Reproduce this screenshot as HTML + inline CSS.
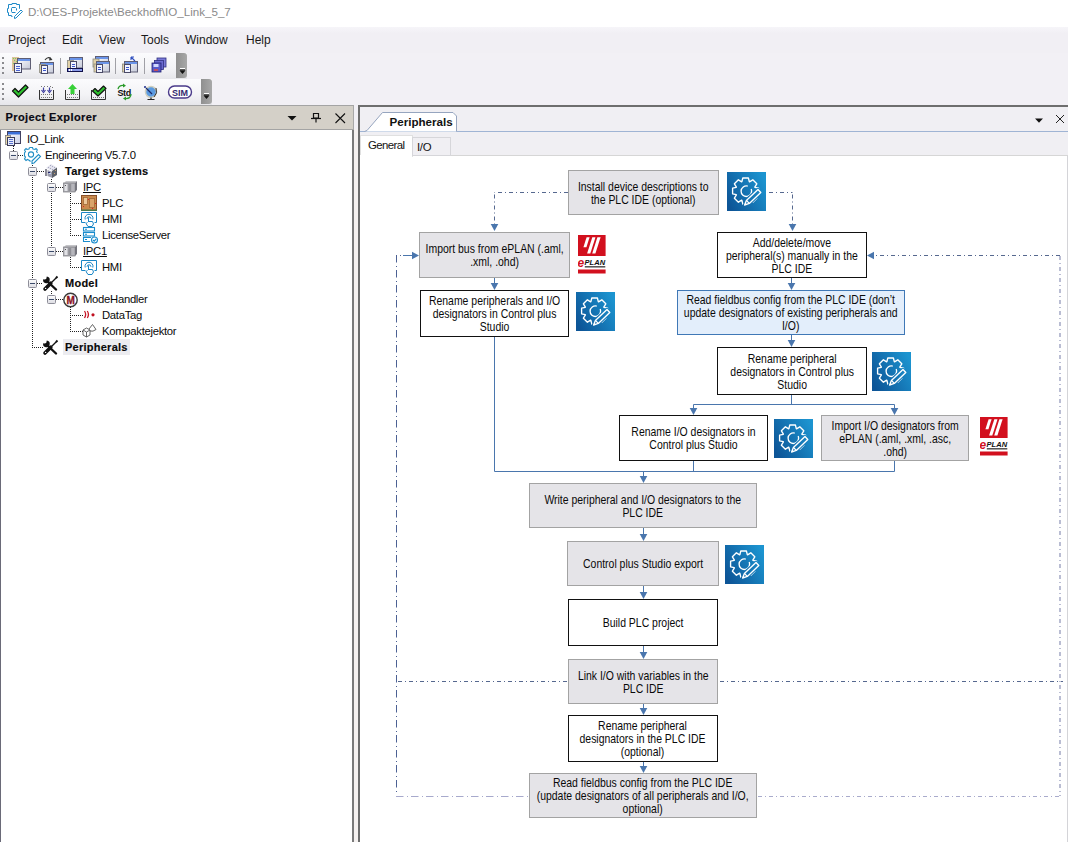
<!DOCTYPE html>
<html><head><meta charset="utf-8">
<style>
*{margin:0;padding:0;box-sizing:border-box}
html,body{width:1068px;height:842px;overflow:hidden;background:#f2f0f5;font-family:"Liberation Sans",sans-serif;position:relative}
.a{position:absolute}
#title{left:0;top:0;width:1068px;height:27px;background:#fff}
#title .t{left:28px;top:4.8px;font-size:11.6px;color:#8a8a8a;white-space:nowrap}
#menu{left:0;top:27px;width:1068px;height:26px;background:linear-gradient(#f6f5f9,#f1eff4 25%,#f1eff4)}
#menu span{position:absolute;top:6px;font-size:12px;color:#1a1a1a}
.tb{background:linear-gradient(#fbfbfd,#f3f3f6 60%,#e6e6ea)}
.grip{background:linear-gradient(90deg,#8f8f8f,#a8a8a8);border-radius:0 3px 3px 0}
#lp{left:0;top:129px;width:354px;height:713px;background:#fff;border-left:1px solid #6a6a78;border-right:2px solid #7a7a7a}
#lphead{left:0;top:105px;width:354px;height:25px;background:#d4d0c8;border-top:1px solid #a4a4a4;border-bottom:1px solid #a4a4a4;border-right:1px solid #a8a8a8}
#lphead .t{left:5.5px;top:5px;font-size:11px;font-weight:bold;color:#0a0a14;letter-spacing:0.4px;-webkit-text-stroke:0.2px #0a0a14}
#split{left:354px;top:129px;width:4px;height:713px;background:#f5f1f0}
#rp{left:358px;top:105px;width:710px;height:737px;background:#fff;border-left:2px solid #6e6e6e;border-top:2px solid #6e6e6e}
#tabstrip{left:360px;top:107px;width:708px;height:25px;background:#f0eff3;border-bottom:1px solid #9fb4d4}
#subtabs{left:360px;top:132px;width:708px;height:24px;background:#f0eff3;border-bottom:1px solid #d6d6d6}
.tree{font-size:11.3px;color:#0a0a0a;white-space:nowrap;letter-spacing:-0.3px}
.tree .r{position:absolute;height:16px;line-height:16px}
.tree .b{font-weight:bold;font-size:11px;letter-spacing:0.25px;-webkit-text-stroke:0.15px #0a0a0a}
.tree .u{text-decoration:underline}
.tree .sel{background:#ececf0;padding:0 2px;margin-left:-2px}
.box{position:absolute;display:flex;align-items:center;justify-content:center;text-align:center;font-size:12.2px;line-height:13px;color:#0a0a0a}
.box>div{transform:scaleX(0.857);white-space:nowrap;position:relative;top:1px}
.g{background:#e5e4e8;border:1px solid #a3a3a3}
.w{background:#fff;border:1.5px solid #111}
.bl{background:#e3eefb;border:1px solid #3f78b6}
</style></head><body>

<svg width="0" height="0" style="position:absolute">
<defs>
<linearGradient id="gg" gradientUnits="userSpaceOnUse" x1="0" y1="30" x2="39" y2="9"><stop offset="0" stop-color="#0d5597"/><stop offset="1" stop-color="#1c94d0"/></linearGradient>
<symbol id="gearsym" viewBox="0 0 39 39">
<rect width="39" height="39" fill="url(#gg)"/>
<g fill="none" stroke="#fff" stroke-width="1.35" stroke-linejoin="round">
<path d="M14.9,9.7 L15.8,6.0 L21.4,6.0 L22.3,9.7 L22.5,9.8 L25.8,7.8 L29.8,11.8 L27.8,15.1 L27.9,15.3 L31.6,16.2 L31.6,21.8 L27.9,22.7 L27.8,22.9 L29.8,26.2 L25.8,30.2 L22.5,28.2 L22.3,28.3 L21.4,32.0 L15.8,32.0 L14.9,28.3 L14.7,28.2 L11.4,30.2 L7.4,26.2 L9.4,22.9 L9.3,22.7 L5.6,21.8 L5.6,16.2 L9.3,15.3 L9.4,15.1 L7.4,11.8 L11.4,7.8 L14.7,9.8Z"/>
<path d="M24.2,17.0 A5.3,5.3 0 1 1 20.8,14.1"/>
</g>
<path d="M17.6,33.0 L22.3,31.4 L33.8,20.5 L31.0,17.5 L19.4,28.4Z" fill="url(#gg)" stroke="url(#gg)" stroke-width="3.5" stroke-linejoin="round"/>
<g fill="none" stroke="#fff" stroke-width="1.35" stroke-linejoin="round">
<path d="M17.6,33.0 L22.3,31.4 L33.8,20.5 L31.0,17.5 L19.4,28.4Z"/>
<path d="M22.3,31.4 L19.4,28.4"/>
</g>
</symbol>
<symbol id="eplansym" viewBox="0 0 28 40">
<rect x="0" y="0" width="27.6" height="21" fill="#d2101e"/>
<g fill="#fff"><path d="M8.6,2.3 L11.6,2.3 L8.4,12.3 L5.4,12.3 Z"/><path d="M14.3,2.3 L17.5,2.3 L12.3,18.5 L9.1,18.5 Z"/><path d="M19.4,2.3 L22.6,2.3 L17.4,18.5 L14.2,18.5 Z"/></g>
<text x="-0.5" y="31.5" font-family="Liberation Sans" font-size="12" font-weight="bold" font-style="italic" fill="#d2101e">e</text>
<text x="6.6" y="30.4" font-family="Liberation Sans" font-size="6.4" font-weight="bold" font-style="italic" fill="#111" textLength="20.5" lengthAdjust="spacingAndGlyphs">PLAN</text>
<rect x="6.8" y="31.3" width="20.5" height="1.1" fill="#111"/>
<rect x="0" y="34.5" width="27.6" height="4" fill="#d2101e"/>
</symbol>
</defs>
</svg>

<div id="title" class="a">
  <svg class="a" style="left:0;top:0" width="26" height="26"><g fill="none" stroke="#1f8ac8" stroke-width="1">
<path d="M20,8.5 L19.5,8.5 L19.5,4.5 L16.5,4.5 L16.5,3.5 L12,3.5 L12,4.5 L8.5,4.5 L8.5,8.5 L7.5,8.5 L7.5,12.5 L8.5,12.5 L8.5,15.5 L11.5,15.5 L11.5,16.5 L12.5,16.5"/>
<path d="M12,7.5 L15.5,7.5 L16.5,8.5 L16.5,10.5 M15.5,12.5 L12,12.5 L11.5,11.5 L11.5,8.5 L12,7.5"/>
<path d="M14.5,16.5 L21,10 L22.5,11.5 L16,18 L14.5,18.5 Z"/>
</g></svg>
  <div class="a t">D:\OES-Projekte\Beckhoff\IO_Link_5_7</div>
</div>

<div id="menu" class="a">
  <span style="left:8px">Project</span>
  <span style="left:62px">Edit</span>
  <span style="left:99px">View</span>
  <span style="left:141px">Tools</span>
  <span style="left:185px">Window</span>
  <span style="left:246px">Help</span>
</div>

<!-- toolbars -->
<div class="a tb" style="left:0;top:53px;width:187px;height:26px"></div>
<div class="a grip" style="left:176px;top:53px;width:11px;height:25px"></div>
<div class="a tb" style="left:0;top:79px;width:212px;height:26px"></div>
<div class="a grip" style="left:201px;top:79px;width:11px;height:25px"></div>
<svg class="a" style="left:0;top:50px" width="220" height="56">
<defs>
<linearGradient id="wg" x1="0" y1="0" x2="1" y2="1"><stop offset="0" stop-color="#ffffff"/><stop offset="1" stop-color="#c4c8d8"/></linearGradient>
<g id="win"><rect x="0.5" y="0.5" width="13" height="10.5" fill="url(#wg)" stroke="#5e5e74"/><rect x="1" y="1" width="12" height="2" fill="#6a94ea"/></g>
<g id="doc"><rect x="0.5" y="0.5" width="6" height="8" fill="#f2f4ff" stroke="#4a4a66"/><rect x="2" y="3" width="3" height="1" fill="#3b55c8"/><rect x="2" y="5" width="3" height="1" fill="#3b55c8"/></g>
<g id="docb"><rect x="-1.5" y="-0.5" width="6" height="8" fill="#e2d2a8" stroke="#8a8a80" stroke-width="0.8"/></g>
</defs>
<!-- grips -->
<g fill="#8a8a8e"><rect x="2" y="7" width="2" height="2"/><rect x="2" y="12" width="2" height="2"/><rect x="2" y="17" width="2" height="2"/><rect x="2" y="22" width="2" height="2"/>
<rect x="2" y="33" width="2" height="2"/><rect x="2" y="38" width="2" height="2"/><rect x="2" y="43" width="2" height="2"/><rect x="2" y="48" width="2" height="2"/></g>
<!-- tb1 icon1 -->
<rect x="12" y="7" width="7" height="14" fill="#dcc29a"/><g fill="#7ad060"><rect x="13" y="8" width="1" height="1"/><rect x="15" y="8" width="1" height="1"/><rect x="14" y="10" width="1" height="1"/><rect x="16" y="11" width="1" height="1"/><rect x="13" y="13" width="1" height="1"/></g><g fill="#c04040"><rect x="17" y="13" width="1" height="1"/></g>
<use href="#win" x="17" y="8"/>
<rect x="14.5" y="13.5" width="7" height="9" fill="#eef2ff" stroke="#4a4a66"/><g fill="#4a62d0"><rect x="16" y="16" width="4" height="1"/><rect x="16" y="18" width="4" height="1"/><rect x="16" y="20" width="4" height="1"/></g>
<!-- icon2 -->
<use href="#win" x="40" y="12"/>
<rect x="39.5" y="14.5" width="6" height="8" fill="#e2d2a8" stroke="#8a8a80" stroke-width="0.8"/>
<use href="#doc" x="41" y="15"/>
<path d="M45,10 Q48,6 51,9" fill="none" stroke="#333" stroke-width="1.2"/><path d="M50,7 L52.5,10 L49,10.5 Z" fill="#333"/>
<rect x="60" y="8" width="1" height="16" fill="#a0a0a6"/>
<!-- icon3 -->
<use href="#win" x="69" y="7"/>
<rect x="67.5" y="10.5" width="6" height="8" fill="#e2d2a8" stroke="#8a8a80" stroke-width="0.8"/>
<use href="#doc" x="70" y="11"/>
<rect x="67" y="18" width="16" height="4" fill="#10104a"/><rect x="68" y="19" width="14" height="2" fill="#8a9ae8"/><rect x="69" y="19" width="1" height="2" fill="#fff"/><rect x="71" y="19" width="1" height="2" fill="#fff"/>
<!-- icon4 -->
<use href="#win" x="95" y="6"/>
<rect x="93" y="9" width="6" height="8" fill="#e2d2a8" stroke="#8a8a80" stroke-width="0.8"/>
<use href="#win" x="96" y="11"/>
<rect x="94" y="14" width="6" height="8" fill="#e2d2a8" stroke="#8a8a80" stroke-width="0.8"/>
<use href="#doc" x="96" y="14"/>
<rect x="115" y="8" width="1" height="16" fill="#a0a0a6"/>
<!-- icon5 -->
<use href="#win" x="124" y="11"/>
<rect x="122.5" y="14" width="6" height="8" fill="#e2d2a8" stroke="#8a8a80" stroke-width="0.8"/>
<use href="#doc" x="124" y="14"/>
<path d="M131,7 L135,11 M131,7 L131,10 M131,7 L134,7" stroke="#3050c0" stroke-width="1.1" fill="none"/>
<rect x="144" y="8" width="1" height="16" fill="#a0a0a6"/>
<!-- icon6 floppies -->
<rect x="157" y="8" width="9" height="9" fill="#7a7ad8" stroke="#303080" stroke-width="0.8"/>
<rect x="154.5" y="10.5" width="9" height="9" fill="#6a6ad0" stroke="#303080" stroke-width="0.8"/>
<rect x="152" y="13" width="9" height="9" fill="#5a5ac8" stroke="#202070" stroke-width="0.8"/>
<rect x="153.5" y="14" width="5" height="3" fill="#d0d8ff"/><rect x="154" y="19" width="4" height="2" fill="#c05060"/>
<!-- grip1 glyph -->
<rect x="180" y="18" width="5" height="1" fill="#fff"/><path d="M179.5,20.5 L185.5,20.5 L182.5,24 Z" fill="#111"/><path d="M180,20 L185,20" stroke="#111"/>
<!-- tb2 -->
<path d="M12.5,41 L15,38.5 L18.5,42 L25.5,35 L28,37.5 L18.5,47 Z" fill="#2ec02e" stroke="#111" stroke-width="1.2" stroke-linejoin="round"/>
<!-- download -->
<path d="M39.5,40 L39.5,49.5 L53.5,49.5 L53.5,40" fill="none" stroke="#333" stroke-width="1"/>
<g fill="#777"><rect x="41" y="44" width="1" height="1"/><rect x="43" y="44" width="1" height="1"/><rect x="45" y="44" width="1" height="1"/><rect x="47" y="44" width="1" height="1"/><rect x="49" y="44" width="1" height="1"/><rect x="51" y="44" width="1" height="1"/><rect x="41" y="47" width="1" height="1"/><rect x="43" y="47" width="1" height="1"/><rect x="45" y="47" width="1" height="1"/><rect x="47" y="47" width="1" height="1"/><rect x="49" y="47" width="1" height="1"/><rect x="51" y="47" width="1" height="1"/>
<rect x="41" y="36" width="1" height="1"/><rect x="44" y="36" width="1" height="1"/><rect x="47" y="36" width="1" height="1"/><rect x="50" y="36" width="1" height="1"/><rect x="52" y="37" width="1" height="1"/></g>
<path d="M43.5,37.5 L43.5,41 M41.5,40 L43.5,42.5 L45.5,40 M49.5,37.5 L49.5,41 M47.5,40 L49.5,42.5 L51.5,40" stroke="#4040a0" stroke-width="1.2" fill="none"/>
<!-- upload -->
<path d="M65.5,40 L65.5,49.5 L79.5,49.5 L79.5,40" fill="none" stroke="#333" stroke-width="1"/>
<g fill="#777"><rect x="67" y="44" width="1" height="1"/><rect x="69" y="44" width="1" height="1"/><rect x="71" y="44" width="1" height="1"/><rect x="73" y="44" width="1" height="1"/><rect x="75" y="44" width="1" height="1"/><rect x="77" y="44" width="1" height="1"/><rect x="67" y="47" width="1" height="1"/><rect x="69" y="47" width="1" height="1"/><rect x="71" y="47" width="1" height="1"/><rect x="73" y="47" width="1" height="1"/><rect x="75" y="47" width="1" height="1"/><rect x="77" y="47" width="1" height="1"/></g>
<path d="M72.5,34 L77,39 L74.5,39 L74.5,44 L70.5,44 L70.5,39 L68,39 Z" fill="#38d038"/>
<!-- check box -->
<path d="M91.5,40 L91.5,49.5 L105.5,49.5 L105.5,40" fill="none" stroke="#333" stroke-width="1"/>
<g fill="#777"><rect x="93" y="47" width="1" height="1"/><rect x="95" y="47" width="1" height="1"/><rect x="97" y="47" width="1" height="1"/><rect x="99" y="47" width="1" height="1"/><rect x="101" y="47" width="1" height="1"/><rect x="103" y="47" width="1" height="1"/></g>
<path d="M92.5,41 L95,38.5 L98,41.5 L103.5,36 L106,38.5 L98,46 Z" fill="#2ec02e" stroke="#111" stroke-width="1.1" stroke-linejoin="round"/>
<!-- Std -->
<text x="117.5" y="45.5" font-family="Liberation Sans" font-size="9" font-weight="bold" fill="#111" letter-spacing="-0.4">Std</text>
<path d="M118,39 Q119,35 124,35.5" fill="none" stroke="#2a9a2a" stroke-width="1.3"/><path d="M123,33.5 L126,35.8 L123,37.5 Z" fill="#2a9a2a"/>
<path d="M131,44 Q131,49 125,48.5" fill="none" stroke="#2a9a2a" stroke-width="1.3"/><path d="M126,46.5 L123,48.5 L126,50.5 Z" fill="#2a9a2a"/>
<!-- globe -->
<circle cx="151" cy="42" r="5.5" fill="#5a9ae0" stroke="#cfcfc0" stroke-width="1.5"/>
<path d="M146,38 L152,44" stroke="#1a2a6a" stroke-width="1.3"/><circle cx="145" cy="37" r="1" fill="#1a2a8a"/>
<path d="M151,47.5 L151,49 M147.5,49.5 L154.5,49.5" stroke="#222" stroke-width="1.2"/>
<path d="M156,38 Q158,43 154,47" fill="none" stroke="#333" stroke-width="1"/>
<!-- SIM -->
<rect x="168.5" y="36" width="23" height="12" rx="6" fill="#fff" stroke="#4a3a8a" stroke-width="1.4"/>
<text x="180" y="45.5" text-anchor="middle" font-family="Liberation Sans" font-size="9" font-weight="bold" fill="#352a70">SIM</text>
<!-- grip2 glyph -->
<rect x="204" y="43" width="5" height="1" fill="#fff"/><path d="M203.5,45.5 L209.5,45.5 L206.5,49 Z" fill="#111"/><path d="M204,45 L209,45" stroke="#111"/>
</svg>


<div id="lp" class="a"></div>
<div id="lphead" class="a"><div class="a t">Project Explorer</div></div>
<div id="split" class="a"></div>
<div id="rp" class="a"></div>
<div id="tabstrip" class="a"></div>
<div id="subtabs" class="a"></div>
<div class="a" style="left:1067px;top:156px;width:1px;height:686px;background:#d4d4d8"></div>
<svg class="a" style="left:0;top:100px" width="1068" height="60">
<!-- project explorer header icons -->
<path d="M287.5,16 L296.5,16 L292,20.5 Z" fill="#111"/>
<g fill="none" stroke="#111" stroke-width="1.2"><path d="M313.5,13.5 L318.5,13.5 L318.5,18 L313.5,18 Z"/><path d="M311,18.5 L321,18.5"/><path d="M316,18.5 L316,22.5"/></g>
<path d="M335.5,13.5 L345,23 M345,13.5 L335.5,23" stroke="#111" stroke-width="1.1"/>
<!-- peripherals tab -->
<path d="M364.5,31.5 L367,30.5 L382.5,12.5 L453,12.5 L456.5,16 L456.5,31.5" fill="#fff" stroke="#96a5bf" stroke-width="1"/>
<text x="389.5" y="25.5" font-family="Liberation Sans" font-size="11.6" font-weight="bold" fill="#111">Peripherals</text>
<!-- right icons -->
<path d="M1035,18.5 L1043,18.5 L1039,22.7 Z" fill="#111"/>
<path d="M1056,15 L1064,23 M1064,15 L1056,23" stroke="#222" stroke-width="1"/>
<!-- subtabs -->
<rect x="360.5" y="35.5" width="52" height="21" fill="#fff" stroke="#e0e0e0"/>
<rect x="360" y="55" width="52" height="3" fill="#fff"/>
<rect x="412.5" y="37.5" width="38" height="18" fill="#f0eff3" stroke="#d6d6da"/>
<text x="368" y="48.5" font-family="Liberation Sans" font-size="11.4" letter-spacing="-0.6" fill="#111">General</text>
<text x="417" y="50.5" font-family="Liberation Sans" font-size="11.4" letter-spacing="-0.3" fill="#111">I/O</text>
</svg>


<div class="tree">
<svg class="a" style="left:0;top:0" width="360" height="842"><g stroke="#222" stroke-width="1" stroke-dasharray="1 1"><line x1="13.5" y1="146" x2="13.5" y2="155"/><line x1="18" y1="155.5" x2="24" y2="155.5"/><line x1="32.5" y1="163" x2="32.5" y2="348"/><line x1="37" y1="171.5" x2="44" y2="171.5"/><line x1="37" y1="283.5" x2="43" y2="283.5"/><line x1="32" y1="347.5" x2="43" y2="347.5"/><line x1="51.5" y1="179" x2="51.5" y2="252"/><line x1="56" y1="187.5" x2="63" y2="187.5"/><line x1="56" y1="251.5" x2="63" y2="251.5"/><line x1="70.5" y1="193" x2="70.5" y2="236"/><line x1="70" y1="203.5" x2="81" y2="203.5"/><line x1="70" y1="219.5" x2="81" y2="219.5"/><line x1="70" y1="235.5" x2="81" y2="235.5"/><line x1="70.5" y1="257" x2="70.5" y2="268"/><line x1="70" y1="267.5" x2="81" y2="267.5"/><line x1="51.5" y1="291" x2="51.5" y2="300"/><line x1="56" y1="299.5" x2="63" y2="299.5"/><line x1="70.5" y1="307" x2="70.5" y2="332"/><line x1="70" y1="315.5" x2="83" y2="315.5"/><line x1="70" y1="331.5" x2="83" y2="331.5"/></g>
<rect x="9.5" y="151.5" width="8" height="8" rx="1" fill="url(#bxg)" stroke="#8e8e99"/><line x1="11" y1="155.5" x2="16" y2="155.5" stroke="#3a4a6a"/>
<rect x="28.5" y="167.5" width="8" height="8" rx="1" fill="url(#bxg)" stroke="#8e8e99"/><line x1="30" y1="171.5" x2="35" y2="171.5" stroke="#3a4a6a"/>
<rect x="47.5" y="183.5" width="8" height="8" rx="1" fill="url(#bxg)" stroke="#8e8e99"/><line x1="49" y1="187.5" x2="54" y2="187.5" stroke="#3a4a6a"/>
<rect x="47.5" y="247.5" width="8" height="8" rx="1" fill="url(#bxg)" stroke="#8e8e99"/><line x1="49" y1="251.5" x2="54" y2="251.5" stroke="#3a4a6a"/>
<rect x="28.5" y="279.5" width="8" height="8" rx="1" fill="url(#bxg)" stroke="#8e8e99"/><line x1="30" y1="283.5" x2="35" y2="283.5" stroke="#3a4a6a"/>
<rect x="47.5" y="295.5" width="8" height="8" rx="1" fill="url(#bxg)" stroke="#8e8e99"/><line x1="49" y1="299.5" x2="54" y2="299.5" stroke="#3a4a6a"/>
</svg>
<div class="r " style="left:27px;top:131px">IO_Link</div>
<div class="r " style="left:45px;top:147px">Engineering V5.7.0</div>
<div class="r b" style="left:65px;top:163px">Target systems</div>
<div class="r u" style="left:83px;top:179px">IPC</div>
<div class="r " style="left:102px;top:195px">PLC</div>
<div class="r " style="left:102px;top:211px">HMI</div>
<div class="r " style="left:102px;top:227px">LicenseServer</div>
<div class="r u" style="left:83px;top:243px">IPC1</div>
<div class="r " style="left:102px;top:259px">HMI</div>
<div class="r b" style="left:65px;top:275px">Model</div>
<div class="r " style="left:83px;top:291px">ModeHandler</div>
<div class="r " style="left:102px;top:307px">DataTag</div>
<div class="r " style="left:102px;top:323px">Kompaktejektor</div>
<div class="r b sel" style="left:65px;top:339px">Peripherals</div>
</div>
<svg class="a" style="left:0;top:0" width="360" height="360">
<defs>
<linearGradient id="bxg" x1="0" y1="0" x2="0" y2="1"><stop offset="0" stop-color="#fdfdfd"/><stop offset="1" stop-color="#dcdce2"/></linearGradient>
<linearGradient id="winb" x1="0" y1="0" x2="1" y2="1"><stop offset="0" stop-color="#fff"/><stop offset="1" stop-color="#c9cfe6"/></linearGradient>
<g id="ipcic">
<path d="M1,3 L3,1 L14,1 L12,3 Z" fill="#c4c4c8"/>
<rect x="0.5" y="3" width="11.5" height="9" fill="#a6a6ac" stroke="#8a8a90" stroke-width="0.8"/>
<path d="M12,3 L14,1 L14,10 L12,12 Z" fill="#76767e"/>
<rect x="1.5" y="4" width="3" height="7" fill="#e2e2e6"/>
<rect x="2" y="5" width="1" height="1" fill="#555"/>
<rect x="5.5" y="4" width="2.5" height="7" fill="#909096"/>
<rect x="8.5" y="4" width="3" height="7" fill="#b6b6bc"/>
</g>
<g id="hmiic" fill="none" stroke="#1a86c6" stroke-width="1">
<path d="M4.5,11.5 L0.5,11.5 L0.5,1.5 L15.5,1.5 L15.5,11.5 L13.5,11.5"/>
<path d="M4.2,8.5 A4,4 0 1 1 11.8,8.5"/>
<path d="M6,7.8 A2,2 0 1 1 10,7.8"/>
<path d="M7.5,6.5 L7.5,11 M8,10.5 L11.5,10.5 L12.5,13 L11,15.5 L7,15.5 L5,12.5 L6.5,11.5"/>
</g>
<g id="toolic">
<path d="M4.5,4.5 L14,13.5" stroke="#111" stroke-width="2.4" stroke-linecap="round"/>
<path d="M1.2,3.2 A3.3,3.3 0 1 0 4.8,0.6 L4.2,3.0 L2.8,3.6 Z" fill="#111"/>
<path d="M14.8,1.2 L8.5,7.5" stroke="#111" stroke-width="1.3"/>
<path d="M15.5,0.5 L14,2" stroke="#111" stroke-width="1.8"/>
<path d="M8.8,7.2 L3,13" stroke="#111" stroke-width="3.6" stroke-linecap="round"/>
<circle cx="3.6" cy="12.4" r="0.7" fill="#fff"/>
</g>
</defs>
<!-- IO_Link -->
<rect x="7.5" y="131.5" width="13" height="12" fill="url(#winb)" stroke="#404060"/>
<rect x="8" y="132" width="12" height="2.5" fill="#3b6fd9"/>
<rect x="5.5" y="135.5" width="5" height="9" fill="#e8d8a8" stroke="#7a7a80" stroke-width="0.8"/>
<rect x="7.5" y="137.5" width="7" height="8" fill="#e8eefc" stroke="#3a3a58"/>
<g stroke="#4a62c8" stroke-width="0.9"><line x1="9" y1="139.5" x2="13" y2="139.5"/><line x1="9" y1="141.5" x2="13" y2="141.5"/><line x1="9" y1="143.5" x2="13" y2="143.5"/></g>
<!-- Engineering -->
<g fill="none" stroke="#2390c6" stroke-width="1.1">
<path d="M29.5,147.5 L32.5,147.5 L33,149 L35,149.5 L36,148.5 L37.5,150 M37.5,150 L36.5,151.5 L37.5,153"/>
<path d="M29.5,147.5 L29,149 L27,149.5 L26,148.5 L24.5,150 L25.5,151.5 L24.5,153 L24.5,156 L25.5,157 L24.5,159 L26,160.5 L27.5,159.5 L29.5,160.5 L30.5,161.5"/>
<circle cx="31" cy="154.5" r="2.6"/>
<path d="M32,161 L38.5,154.5 L40.5,156.5 L34,163 L32,163.5 Z"/>
</g>
<!-- Target systems cube stack -->
<g>
<path d="M46,168 L51,164 L57,167.5 L52,171 Z" fill="#e4e4ee"/>
<g fill="#a8a8c0"><rect x="50" y="165" width="1" height="1"/><rect x="52" y="166" width="1" height="1"/><rect x="48" y="167" width="1" height="1"/><rect x="54" y="167" width="1" height="1"/><rect x="50" y="168" width="1" height="1"/><rect x="52" y="169" width="1" height="1"/></g>
<rect x="45" y="169" width="2" height="7" fill="#8a8a96"/>
<path d="M47.5,170 L52.5,172 L52.5,178 L47.5,176 Z" fill="#9a9aaa"/>
<path d="M52,171 L57,167.5 L57,175 L52,178 Z" fill="#5c6068"/>
<rect x="48" y="172" width="2" height="1" fill="#2a2a70"/><rect x="49" y="173" width="2" height="1" fill="#c0d8ff"/>
<g fill="#c8a070"><rect x="55" y="170" width="1" height="1"/><rect x="54" y="173" width="1" height="1"/></g>
</g>
<use href="#ipcic" x="63" y="180"/>
<use href="#ipcic" x="63" y="244"/>
<!-- PLC -->
<rect x="81.5" y="195.5" width="15" height="15" fill="#c98a4e" stroke="#8a5028"/>
<rect x="81" y="209.5" width="16" height="1.5" fill="#4a7a4a"/>
<rect x="83.5" y="197.5" width="4" height="7" fill="#ecc89a" stroke="#9a6030" stroke-width="0.7"/>
<rect x="89.5" y="198.5" width="5" height="9" fill="#d9a46a" stroke="#9a6030" stroke-width="0.7"/>
<g fill="#e02020"><rect x="83" y="206" width="1" height="1"/><rect x="88" y="199" width="1" height="1"/><rect x="95" y="203" width="1" height="1"/><rect x="92" y="208" width="1" height="1"/></g>
<use href="#hmiic" x="81" y="211"/>
<use href="#hmiic" x="81" y="259"/>
<!-- License server -->
<g fill="none" stroke="#1b8ccc" stroke-width="1.1">
<rect x="83.5" y="227.5" width="11" height="3.5"/>
<rect x="83.5" y="232.5" width="11" height="3.5"/>
<path d="M90,241.5 L83.5,241.5 L83.5,237.5 L91,237.5"/>
<circle cx="94.5" cy="240" r="3"/>
<path d="M93,240 L94.2,241.2 L96.2,238.8"/>
<path d="M85,229.3 L87,229.3 M85,234.3 L87,234.3 M85,239.5 L87,239.5"/>
</g>
<use href="#toolic" x="42" y="276"/>
<use href="#toolic" x="42" y="340"/>
<!-- ModeHandler M -->
<circle cx="70.5" cy="300" r="6.7" fill="#fff" stroke="#3a3a3a" stroke-width="1.4"/>
<text x="70.6" y="304.2" text-anchor="middle" font-family="Liberation Sans" font-size="10" font-weight="bold" fill="#8a1222" stroke="#8a1222" stroke-width="0.3">M</text>
<!-- DataTag -->
<g fill="none" stroke="#c81828" stroke-width="1.3"><path d="M84.5,311 Q86.8,314.5 84.5,318"/><path d="M87.3,311 Q89.6,314.5 87.3,318"/></g>
<circle cx="93" cy="314.8" r="1.6" fill="#c01020"/>
<!-- Kompaktejektor -->
<g fill="none" stroke="#555" stroke-width="0.9">
<path d="M83,330 L86.5,328 L90,330 L90,335 L86.5,337 L83,335 Z M83,330 L86.5,332 L90,330 M86.5,332 L86.5,337"/>
<path d="M89,329 L92.5,324.5 L96,329.5 Q93,332 90,331"/>
</g>
</svg>

<div id="diagram">
<svg class="a" style="left:0;top:0" width="1068" height="842"><line x1="568" y1="192.5" x2="494.5" y2="192.5" stroke="#56688f" stroke-width="1" stroke-dasharray="4 3 1 3" stroke-dashoffset="0"/><line x1="494.5" y1="192.5" x2="494.5" y2="224" stroke="#56688f" stroke-width="1" stroke-dasharray="4 3 1 3" stroke-dashoffset="-2"/><path d="M490.7,224 L498.3,224 L494.5,231 Z" fill="#4a76ad"/><line x1="766" y1="192.5" x2="792.5" y2="192.5" stroke="#56688f" stroke-width="1" stroke-dasharray="4 3 1 3" stroke-dashoffset="-3"/><line x1="792.5" y1="192.5" x2="792.5" y2="224" stroke="#56688f" stroke-width="1" stroke-dasharray="4 3 1 3" stroke-dashoffset="-2"/><path d="M788.7,224 L796.3,224 L792.5,231 Z" fill="#4a76ad"/><line x1="494.5" y1="277" x2="494.5" y2="284" stroke="#4a76ad" stroke-width="1"/><path d="M490.7,283 L498.3,283 L494.5,290 Z" fill="#4a76ad"/><line x1="494.5" y1="336" x2="494.5" y2="471.5" stroke="#4a76ad" stroke-width="1"/><line x1="494.5" y1="471.5" x2="894.5" y2="471.5" stroke="#4a76ad" stroke-width="1"/><line x1="791.5" y1="277" x2="791.5" y2="284" stroke="#4a76ad" stroke-width="1"/><path d="M787.7,283 L795.3,283 L791.5,290 Z" fill="#4a76ad"/><line x1="791.5" y1="335" x2="791.5" y2="341" stroke="#4a76ad" stroke-width="1"/><path d="M787.7,340 L795.3,340 L791.5,347 Z" fill="#4a76ad"/><line x1="791.5" y1="394" x2="791.5" y2="404.5" stroke="#4a76ad" stroke-width="1"/><line x1="693.5" y1="404.5" x2="894.5" y2="404.5" stroke="#4a76ad" stroke-width="1"/><line x1="693.5" y1="404.5" x2="693.5" y2="409" stroke="#4a76ad" stroke-width="1"/><path d="M689.7,408 L697.3,408 L693.5,415 Z" fill="#4a76ad"/><line x1="894.5" y1="404.5" x2="894.5" y2="409" stroke="#4a76ad" stroke-width="1"/><path d="M890.7,408 L898.3,408 L894.5,415 Z" fill="#4a76ad"/><line x1="693.5" y1="460" x2="693.5" y2="471.5" stroke="#4a76ad" stroke-width="1"/><line x1="894.5" y1="460" x2="894.5" y2="471.5" stroke="#4a76ad" stroke-width="1"/><line x1="643.5" y1="471.5" x2="643.5" y2="477" stroke="#4a76ad" stroke-width="1"/><path d="M639.7,476 L647.3,476 L643.5,483 Z" fill="#4a76ad"/><line x1="643.5" y1="527" x2="643.5" y2="535" stroke="#4a76ad" stroke-width="1"/><path d="M639.7,534 L647.3,534 L643.5,541 Z" fill="#4a76ad"/><line x1="643.5" y1="585" x2="643.5" y2="593" stroke="#4a76ad" stroke-width="1"/><path d="M639.7,592 L647.3,592 L643.5,599 Z" fill="#4a76ad"/><line x1="643.5" y1="645" x2="643.5" y2="653" stroke="#4a76ad" stroke-width="1"/><path d="M639.7,652 L647.3,652 L643.5,659 Z" fill="#4a76ad"/><line x1="643.5" y1="703" x2="643.5" y2="709" stroke="#4a76ad" stroke-width="1"/><path d="M639.7,708 L647.3,708 L643.5,715 Z" fill="#4a76ad"/><line x1="643.5" y1="761" x2="643.5" y2="767" stroke="#4a76ad" stroke-width="1"/><path d="M639.7,766 L647.3,766 L643.5,773 Z" fill="#4a76ad"/><line x1="396.5" y1="255" x2="396.5" y2="793" stroke="#4c6194" stroke-width="1" stroke-dasharray="7.5 3.5 1 3" stroke-dashoffset="0"/><line x1="400" y1="255.5" x2="401" y2="255.5" stroke="#56688f" stroke-width="1"/><line x1="403" y1="255.5" x2="413" y2="255.5" stroke="#4a76ad" stroke-width="1"/><path d="M412,251.7 L412,259.3 L419,255.5 Z" fill="#4a76ad"/><line x1="1061" y1="255.5" x2="874" y2="255.5" stroke="#56688f" stroke-width="1" stroke-dasharray="4 3 1 3" stroke-dashoffset="-1"/><path d="M874,251.7 L874,259.3 L867,255.5 Z" fill="#4a76ad"/><line x1="1060" y1="256" x2="1060" y2="796" stroke="#a9adc9" stroke-width="1.6" stroke-dasharray="4 3 1 3" stroke-dashoffset="0"/><line x1="397" y1="681.5" x2="568" y2="681.5" stroke="#56688f" stroke-width="1" stroke-dasharray="4 3 1 3" stroke-dashoffset="-1"/><line x1="718" y1="681.5" x2="1063" y2="681.5" stroke="#56688f" stroke-width="1" stroke-dasharray="4 3 1 3" stroke-dashoffset="-2"/><line x1="396" y1="796.5" x2="529" y2="796.5" stroke="#a7a9cc" stroke-width="1" stroke-dasharray="7.5 3.5 1 3" stroke-dashoffset="0"/><line x1="757" y1="796.5" x2="1061" y2="796.5" stroke="#a9abcc" stroke-width="1" stroke-dasharray="4 3 1 3" stroke-dashoffset="-1"/></svg>
<div class="box g" style="left:568px;top:170px;width:151px;height:45px"><div>Install device descriptions to<br>the PLC IDE (optional)</div></div>
<div class="box g" style="left:419px;top:232px;width:151px;height:46px"><div>Import bus from ePLAN (.aml,<br>.xml, .ohd)</div></div>
<div class="box w" style="left:717px;top:232px;width:150px;height:46px"><div>Add/delete/move<br>peripheral(s) manually in the<br>PLC IDE</div></div>
<div class="box w" style="left:420px;top:290px;width:149px;height:47px"><div>Rename peripherals and I/O<br>designators in Control plus<br>Studio</div></div>
<div class="box bl" style="left:677px;top:290px;width:228px;height:45px"><div>Read fieldbus config from the PLC IDE (don&#8217;t<br>update designators of existing peripherals and<br>I/O)</div></div>
<div class="box w" style="left:717px;top:347px;width:150px;height:48px"><div>Rename peripheral<br>designators in Control plus<br>Studio</div></div>
<div class="box w" style="left:619px;top:415px;width:149px;height:46px"><div>Rename I/O designators in<br>Control plus Studio</div></div>
<div class="box g" style="left:821px;top:415px;width:148px;height:46px"><div>Import I/O designators from<br>ePLAN (.aml, .xml, .asc,<br>.ohd)</div></div>
<div class="box g" style="left:529px;top:483px;width:228px;height:45px"><div>Write peripheral and I/O designators to the<br>PLC IDE</div></div>
<div class="box g" style="left:567px;top:541px;width:152px;height:45px"><div>Control plus Studio export</div></div>
<div class="box w" style="left:568px;top:599px;width:150px;height:47px"><div>Build PLC project</div></div>
<div class="box g" style="left:568px;top:659px;width:150px;height:45px"><div>Link I/O with variables in the<br>PLC IDE</div></div>
<div class="box w" style="left:568px;top:715px;width:150px;height:47px"><div>Rename peripheral<br>designators in the PLC IDE<br>(optional)</div></div>
<div class="box g" style="left:529px;top:773px;width:228px;height:45px"><div>Read fieldbus config from the PLC IDE<br>(update designators of all peripherals and I/O,<br>optional)</div></div>
<svg class="a gear" style="left:727px;top:172px" width="39" height="39"><use href="#gearsym"/></svg>
<svg class="a gear" style="left:576px;top:292px" width="39" height="39"><use href="#gearsym"/></svg>
<svg class="a gear" style="left:872px;top:352px" width="39" height="39"><use href="#gearsym"/></svg>
<svg class="a gear" style="left:774px;top:419px" width="39" height="39"><use href="#gearsym"/></svg>
<svg class="a gear" style="left:725px;top:545px" width="39" height="39"><use href="#gearsym"/></svg>
<svg class="a" style="left:578px;top:235px" width="28" height="40"><use href="#eplansym"/></svg>
<svg class="a" style="left:980px;top:417px" width="28" height="40"><use href="#eplansym"/></svg>
</div>
</body></html>
